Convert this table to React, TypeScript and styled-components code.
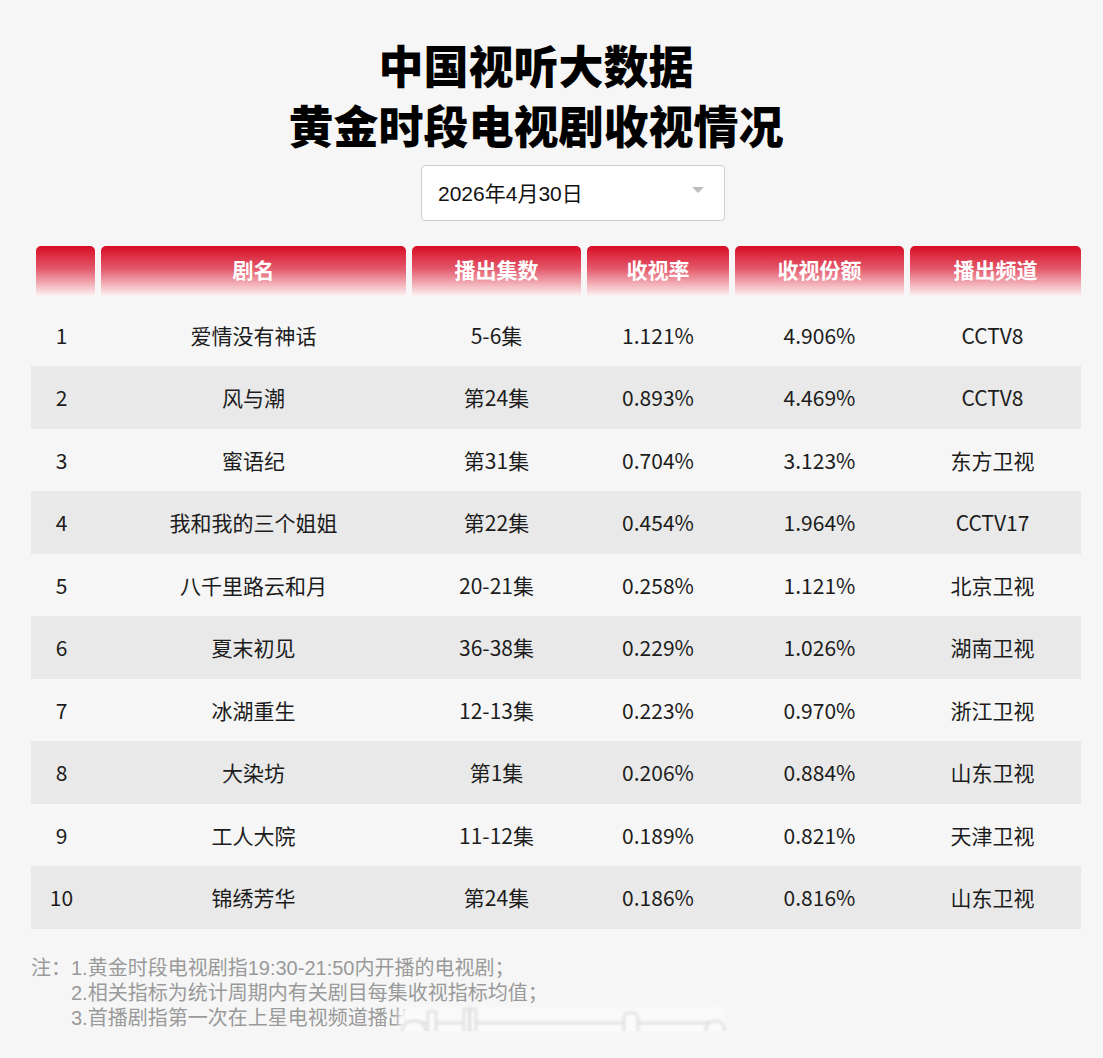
import React from "react";
import styled, { createGlobalStyle } from "styled-components";

const Global = createGlobalStyle`
  html, body { margin: 0; padding: 0; background: #f6f6f6; }
  body { font-family: "Noto Sans CJK SC", "Noto Sans", sans-serif; color: #222; }
`;

const Page = styled.div`
  width: 1050px;
  padding: 35px 0 0 31px;
  display: flex;
  flex-direction: column;
`;

const Title = styled.h1`
  margin: 0;
  padding-right: 40px;
  text-align: center;
  font-size: 45px;
  line-height: 60px;
  font-weight: 900;
  color: #000;
`;

const SelectRow = styled.div`
  display: flex;
  justify-content: center;
  padding-left: 34px;
  margin-top: 10px;
`;

const Select = styled.div`
  width: 304px;
  height: 56px;
  box-sizing: border-box;
  background: #fff;
  border: 1px solid #cfcfcf;
  border-radius: 4px;
  display: flex;
  align-items: center;
  justify-content: space-between;
  padding: 0 20px 2px 16px;
  font-family: "Liberation Sans", "Noto Sans CJK SC", sans-serif;
  font-size: 21px;
  color: #111;
`;

const Caret = styled.span`
  width: 0;
  height: 0;
  border-left: 6px solid transparent;
  border-right: 6px solid transparent;
  border-top: 6px solid #bdbdbd;
  margin-top: -4px;
`;

const cols = "59px 305px 169px 142px 169px 171px";

const Header = styled.div`
  margin-top: 25px;
  display: grid;
  grid-template-columns: ${cols};
  column-gap: 6px;
  padding-left: 5px;
`;

const HeadCell = styled.div`
  height: 50px;
  border-radius: 5px 5px 0 0;
  background: linear-gradient(to bottom, #d70d25 0%, #e4586a 45%, #fdf3f4 100%);
  color: #fff;
  font-weight: 700;
  font-size: 21px;
  display: flex;
  align-items: center;
  justify-content: center;
  padding-bottom: 4px;
  box-sizing: border-box;
`;

const Body = styled.div`
  margin-top: 7.5px;
  display: flex;
  flex-direction: column;
`;

const Row = styled.div<{ $shade: boolean }>`
  height: 62.5px;
  display: grid;
  grid-template-columns: ${cols};
  column-gap: 6px;
  padding-left: 5px;
  align-items: center;
  background: ${(p) => (p.$shade ? "#e9e9e9" : "transparent")};
`;

const Cell = styled.div<{ $shift?: number }>`
  text-align: center;
  font-size: 21px;
  color: #1c1c1c;
  transform: translateX(${(p) => p.$shift ?? 0}px);
`;

const Notes = styled.div`
  margin-top: 27px;
  display: grid;
  grid-template-columns: 40px auto;
  font-family: "Liberation Sans", "Noto Sans CJK SC", sans-serif;
  font-size: 20px;
  line-height: 25px;
  color: #9a9a9a;
  position: relative;
`;

const NoteLines = styled.div`
  display: flex;
  flex-direction: column;
`;

const NoteLine = styled.div`
  height: 25px;
  white-space: nowrap;
`;

const Watermark = styled.div`
  position: absolute;
  left: 368px;
  top: 52px;
  width: 326px;
  height: 40px;
`;

const WmFog = styled.div`
  position: absolute;
  inset: 0;
  background: rgba(250, 250, 250, 0.96);
  filter: blur(3px);
`;

const WmShape = styled.span<{ $x: number; $y: number; $w: number; $h: number; $r: number }>`
  position: absolute;
  left: ${(p) => p.$x}px;
  top: ${(p) => p.$y}px;
  width: ${(p) => p.$w}px;
  height: ${(p) => p.$h}px;
  border-radius: ${(p) => p.$r}px;
  border: 2px solid #d9d9d9;
  background: #fbfbfb;
  filter: blur(1.4px);
`;

const heads = ["", "剧名", "播出集数", "收视率", "收视份额", "播出频道"];

const data: [string, string, string, string, string, string][] = [
  ["1", "爱情没有神话", "5-6集", "1.121%", "4.906%", "CCTV8"],
  ["2", "风与潮", "第24集", "0.893%", "4.469%", "CCTV8"],
  ["3", "蜜语纪", "第31集", "0.704%", "3.123%", "东方卫视"],
  ["4", "我和我的三个姐姐", "第22集", "0.454%", "1.964%", "CCTV17"],
  ["5", "八千里路云和月", "20-21集", "0.258%", "1.121%", "北京卫视"],
  ["6", "夏末初见", "36-38集", "0.229%", "1.026%", "湖南卫视"],
  ["7", "冰湖重生", "12-13集", "0.223%", "0.970%", "浙江卫视"],
  ["8", "大染坊", "第1集", "0.206%", "0.884%", "山东卫视"],
  ["9", "工人大院", "11-12集", "0.189%", "0.821%", "天津卫视"],
  ["10", "锦绣芳华", "第24集", "0.186%", "0.816%", "山东卫视"],
];

const shifts = [-4, 0, 0, 0, 0, -3];

const marks = [
  { x: 10, y: 14, w: 300, h: 12, r: 6 },
  { x: 2, y: 12, w: 22, h: 24, r: 12 },
  { x: 28, y: 2, w: 6, h: 26, r: 3 },
  { x: 64, y: 0, w: 4, h: 22, r: 2 },
  { x: 70, y: 0, w: 4, h: 22, r: 2 },
  { x: 224, y: 4, w: 12, h: 32, r: 6 },
  { x: 306, y: 12, w: 16, h: 18, r: 9 },
];

export default function App() {
  return (
    <>
      <Global />
      <Page>
        <Title>
          中国视听大数据
          <br />
          黄金时段电视剧收视情况
        </Title>
        <SelectRow>
          <Select>
            <span>2026年4月30日</span>
            <Caret />
          </Select>
        </SelectRow>
        <Header>
          {heads.map((h, i) => (
            <HeadCell key={i}>{h}</HeadCell>
          ))}
        </Header>
        <Body>
          {data.map((r, i) => (
            <Row key={i} $shade={i % 2 === 1}>
              {r.map((c, j) => (
                <Cell key={j} $shift={shifts[j]}>
                  {c}
                </Cell>
              ))}
            </Row>
          ))}
        </Body>
        <Notes>
          <NoteLine>注：</NoteLine>
          <NoteLines>
            <NoteLine>1.黄金时段电视剧指19:30-21:50内开播的电视剧；</NoteLine>
            <NoteLine>2.相关指标为统计周期内有关剧目每集收视指标均值；</NoteLine>
            <NoteLine>3.首播剧指第一次在上星电视频道播出</NoteLine>
          </NoteLines>
          <Watermark>
            <WmFog />
            {marks.map((m, i) => (
              <WmShape key={i} $x={m.x} $y={m.y} $w={m.w} $h={m.h} $r={m.r} />
            ))}
          </Watermark>
        </Notes>
      </Page>
    </>
  );
}
